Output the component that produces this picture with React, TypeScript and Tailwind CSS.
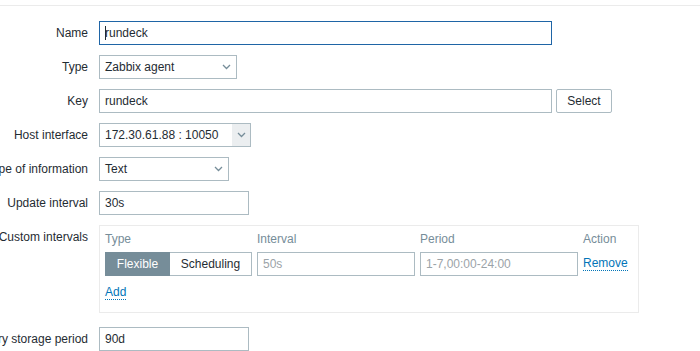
import React from 'react';

const font = "font-['Liberation_Sans',Arial,sans-serif]";

function Chevron() {
  return (
    <svg width="9" height="6" viewBox="0 0 9 6" className="shrink-0">
      <path d="M1 1l3.5 3.5L8 1" fill="none" stroke="#768d99" strokeWidth="1.3" />
    </svg>
  );
}

function Row({ label, children, top = false }: { label: string; children: React.ReactNode; top?: boolean }) {
  return (
    <div className={`flex ${top ? 'items-start' : 'items-center'} mb-[10px]`}>
      <div className={`w-[88px] mr-[11px] shrink-0 flex justify-end whitespace-nowrap text-[#1f2c33] ${top ? 'pt-[5px]' : ''}`}>
        {label}
      </div>
      {children}
    </div>
  );
}

function Field({ value, width, focused = false, muted = false, caret = false }: { value: string; width: string; focused?: boolean; muted?: boolean; caret?: boolean }) {
  return (
    <div
      className={`${width} h-6 flex items-center px-[5px] border bg-white ${focused ? 'border-[#1f65a6]' : 'border-[#acbbc2]'} ${muted ? 'text-[#9ba3a8]' : 'text-[#1f2c33]'}`}
    >
      {caret && <span className="w-px h-[14px] bg-[#1f2c33] -mr-px" />}
      {value}
    </div>
  );
}

function SelectBox({ value, width, shaded = false }: { value: string; width: string; shaded?: boolean }) {
  return (
    <div className={`${width} h-6 flex items-center border border-[#acbbc2] bg-white text-[#1f2c33]`}>
      <span className="flex-1 pl-[5px]">{value}</span>
      {shaded ? (
        <span className="w-[18px] h-full flex items-center justify-center bg-[#ebeef0]">
          <Chevron />
        </span>
      ) : (
        <span className="pr-[5px] flex items-center">
          <Chevron />
        </span>
      )}
    </div>
  );
}

export default function App() {
  return (
    <div className={`${font} text-[12px] leading-[14px] bg-white w-[700px] h-[351px] overflow-hidden`}>
      <div className="h-[6px] border-b border-[#ebebeb]" />
      <div className="pt-[15px]">
        <Row label="Name">
          <Field value="rundeck" width="w-[453px]" focused caret />
        </Row>
        <Row label="Type">
          <SelectBox value="Zabbix agent" width="w-[138px]" />
        </Row>
        <Row label="Key">
          <Field value="rundeck" width="w-[453px]" />
          <button className="ml-[4px] w-[56px] h-6 border border-[#acbbc2] rounded-[2px] bg-white text-[#1f2c33]">
            Select
          </button>
        </Row>
        <Row label="Host interface">
          <SelectBox value="172.30.61.88 : 10050" width="w-[152px]" shaded />
        </Row>
        <Row label="Type of information">
          <SelectBox value="Text" width="w-[130px]" />
        </Row>
        <Row label="Update interval">
          <Field value="30s" width="w-[150px]" />
        </Row>
        <div className="mb-[14px]">
          <Row label="Custom intervals" top>
            <div className="w-[540px] h-[88px] border border-[#ebebeb] pl-[5px] pt-[6px]">
              <div className="flex text-[#768d99] h-[14px] mb-[6px]">
                <span className="w-[152px]">Type</span>
                <span className="w-[163px]">Interval</span>
                <span className="w-[163px]">Period</span>
                <span>Action</span>
              </div>
              <div className="flex items-center h-6">
                <div className="flex h-6 mr-[5px]">
                  <span className="w-[65px] h-6 flex items-center justify-center bg-[#768d99] text-white border border-[#768d99]">
                    Flexible
                  </span>
                  <span className="w-[82px] h-6 flex items-center justify-center bg-white text-[#1f2c33] border border-l-0 border-[#acbbc2]">
                    Scheduling
                  </span>
                </div>
                <Field value="50s" width="w-[158px]" muted />
                <span className="w-[5px]" />
                <Field value="1-7,00:00-24:00" width="w-[158px]" muted />
                <span className="ml-[5px] text-[#0275b8] border-b border-dotted border-[#0275b8] leading-[13px]">
                  Remove
                </span>
              </div>
              <div className="mt-[9px]">
                <span className="text-[#0275b8] border-b border-dotted border-[#0275b8] leading-[13px] inline-block">
                  Add
                </span>
              </div>
            </div>
          </Row>
        </div>
        <Row label="History storage period">
          <Field value="90d" width="w-[150px]" />
        </Row>
      </div>
    </div>
  );
}
